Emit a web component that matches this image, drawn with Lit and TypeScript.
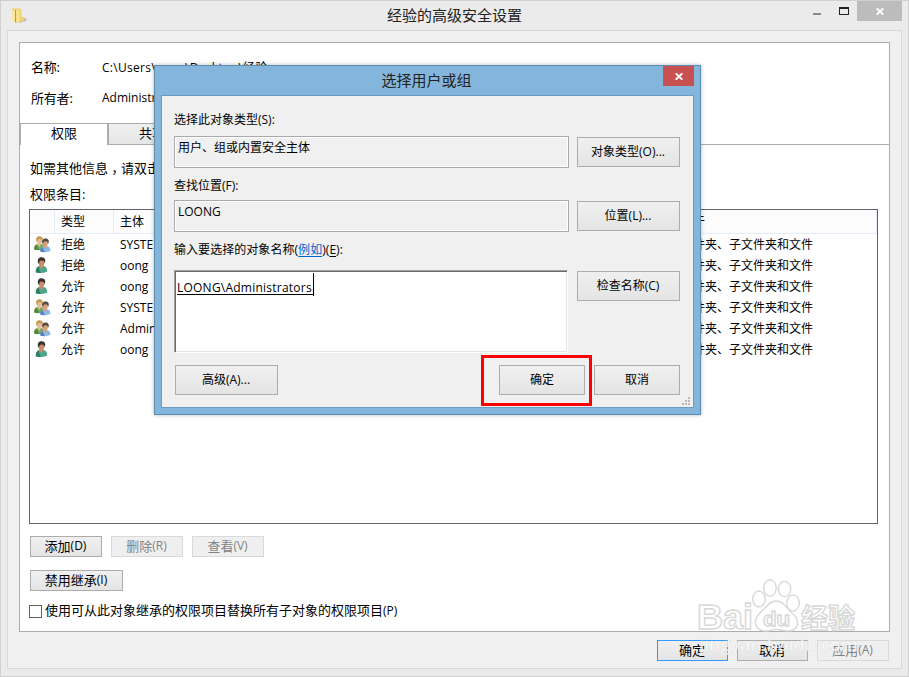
import { LitElement, html, css, svg } from "lit";
import { customElement } from "lit/decorators.js";

const entries = [
  { group: true, type: "拒绝", who: "SYSTEM" },
  { group: false, type: "拒绝", who: "oong" },
  { group: false, type: "允许", who: "oong" },
  { group: true, type: "允许", who: "SYSTEM" },
  { group: true, type: "允许", who: "Administrators" },
  { group: false, type: "允许", who: "oong" },
];

const base = css`
  * { box-sizing: border-box; }
  .btn {
    display: flex; align-items: center; justify-content: center;
    border: 1px solid #acacac; background: linear-gradient(#f0f0f0, #e4e4e4);
    color: #000; white-space: nowrap; flex: none;
    padding: 0 1px 2px 0;
  }
`;

const person = (hair: string, skin: string, body: string, shade: string) => svg`
  <path d="M1 15 C.6 10.5 3 9.3 5 8.6 L8.2 8.6 C11 9.3 12.4 10.5 12.3 14.6 Q6 17 1 15Z" fill=${body}/>
  <path d="M1 15 C.8 12 2 10.3 3.4 9.5 L6 15.8 Q3 15.8 1 15Z" fill=${shade}/>
  <path d="M4.6 7 L8.6 7 L8.4 9.4 L6.6 12.4 L4.6 9.4Z" fill=${skin}/>
  <ellipse cx="6.8" cy="5" rx="2.9" ry="3.6" fill=${skin}/>
  <path d="M3.4 6 C2 1.6 4.6 0 7 .1 C10 .2 11.2 2.6 10 6.2 C9.6 4.2 8.6 3.4 6.8 3.3 C5.2 3.3 4.4 4 4.2 6.6Z" fill=${hair}/>`;

const userIcon = html`<svg width="17" height="17" viewBox="0 0 17 17">
  <g transform="translate(.8 .2)">${person("#3b332e", "#c98c66", "#4ea587", "#2f7d67")}</g></svg>`;
const groupIcon = html`<svg width="17" height="17" viewBox="0 0 17 17">
  <g transform="translate(-.6 .2) scale(.9 .88)">${person("#c2994e", "#e5bd92", "#75a957", "#4f8440")}</g>
  <g transform="translate(5.4 2.4) scale(.9 .87)">${person("#57493f", "#d7a17b", "#8eb9e6", "#4f83bd")}</g></svg>`;

const cross = html`<svg width="8" height="7" viewBox="0 0 8 7"><path d="M.7 .3 L7.3 6.7 M7.3 .3 L.7 6.7" stroke="#fff" stroke-width="1.9"/></svg>`;

@customElement("pick-dialog")
class PickDialog extends LitElement {
  static styles = [base, css`
    :host {
      display: flex; flex-direction: column; box-sizing: border-box;
      width: 547px; height: 350px; padding: 0 6px 6px;
      background: #84b6dc; border: 1px solid #5b8cb2;
      box-shadow: 0 0 4px rgba(0,0,0,.28);
      font-size: 12px; color: #000;
    }
    .title { height: 29px; display: flex; flex: none; }
    .caption { flex: 1; text-align: center; font-size: 15px; line-height: 29px; padding-left: 29px; color: #222; }
    .close { width: 31px; height: 20px; background: #c75050; display: grid; place-items: center; padding: 1px 0 0 1px; }
    .client {
      flex: 1; background: #f0f0f0; border: 1px solid #6a9bc0;
      padding: 11px 13px 0 12px; display: flex; flex-direction: column;
    }
    .label { height: 29px; line-height: 25px; white-space: nowrap; flex: none; }
    .label.mid { height: 32px; line-height: 35px; }
    .label.tall { height: 38px; line-height: 35px; letter-spacing: .05px; }
    .row { display: flex; justify-content: space-between; flex: none; }
    .field {
      width: 395px; height: 32px; border: 1px solid #a9a9ae; box-shadow: inset 0 0 0 1px #fff;
      padding: 2px 3px; line-height: 18px; background: #f0f0f0;
    }
    .side { width: 103px; height: 30px; margin-top: 1px; }
    .area {
      width: 394px; height: 83px; background: #fff; padding: 7px 1px;
      border: 1px solid #a0a0a0; border-right-color: #fff; border-bottom-color: #fff;
      box-shadow: inset 1px 1px 0 #696969, inset -1px -1px 0 #e3e3e3;
      display: flex; align-items: flex-start;
    }
    .value { border-bottom: 1px solid #000; line-height: 20px; height: 17px; letter-spacing: .23px; margin-left: 1px; width: 136px; white-space: nowrap; }
    .caret { width: 1px; height: 23px; background: #000; margin-top: -5px; }
    .link { color: #0066cc; text-decoration: underline; text-underline-offset: 2px; }
    .key { text-decoration: underline; text-underline-offset: 2px; }
    .actions { margin-top: 12px; display: flex; gap: 9px; padding-left: 1px; }
    .wide { width: 103px; height: 30px; margin-right: auto; }
    .small { width: 86px; height: 30px; }
    .actions .small { padding-right: 0; }
    .grip { align-self: flex-end; margin: 2px -10px 0 0; flex: none; display: block; }
  `];
  render() {
    return html`
      <div class="title">
        <div class="caption">选择用户或组</div>
        <div class="close">${cross}</div>
      </div>
      <div class="client">
        <div class="label">选择此对象类型(S):</div>
        <div class="row"><div class="field">用户、组或内置安全主体</div><div class="btn side">对象类型(O)...</div></div>
        <div class="label mid">查找位置(F):</div>
        <div class="row"><div class="field">LOONG</div><div class="btn side">位置(L)...</div></div>
        <div class="label tall">输入要选择的对象名称(<span class="link">例如</span>)(<span class="key">E</span>):</div>
        <div class="row"><div class="area"><div class="value">LOONG\\Administrators</div><div class="caret"></div></div><div class="btn side">检查名称(C)</div></div>
        <div class="actions"><div class="btn wide">高级(A)...</div><div class="btn small">确定</div><div class="btn small">取消</div></div>
        <svg class="grip" width="8" height="8" fill="#b8b8b8"><path d="M6 0h2v2h-2zM3 3h2v2h-2zM6 3h2v2h-2zM0 6h2v2h-2zM3 6h2v2h-2zM6 6h2v2h-2z"/></svg>
      </div>`;
  }
}

@customElement("app-root")
class AppRoot extends LitElement {
  static styles = [base, css`
    :host {
      display: flex; flex-direction: column; position: relative; overflow: hidden; box-sizing: border-box;
      width: 909px; height: 677px; background: #ebebeb; border: 1px solid #d0d0d0;
      padding: 0 6px 7px 6px; color: #000;
      font: 12px "Open Sans", "Noto Sans CJK SC", sans-serif;
    }
    .titlebar { height: 29px; flex: none; display: flex; }
    .folder { margin: 7px 0 0 4px; width: 17px; height: 16px; flex: none; }
    .caption { flex: 1; text-align: center; font-size: 15px; line-height: 29px; color: #222; padding-left: 68px; }
    .ctl { display: flex; flex: none; }
    .min { width: 8px; height: 2px; background: #888; margin: 12px 18px 0 0; }
    .max { width: 10px; height: 8px; border: 1px solid #222; border-top-width: 2px; margin: 6px 8px 0 0; }
    .x { width: 45px; height: 20px; background: #bcbcbc; display: grid; place-items: center; padding: 1px 0 0 1px; }
    .client { flex: 1; background: #f0f0f0; border: 1px solid #d9d9d9; padding: 11px 12px 0 11px; }
    .panel { width: 871px; height: 590px; background: #fff; border: 1px solid #acacac; }
    .line { display: flex; padding-left: 11px; height: 31px; line-height: 30px; font-size: 13px; white-space: nowrap; }
    .line:first-child { margin-top: 9px; }
    .line .k { width: 71px; letter-spacing: -.2px; }
    .line .v { font-size: 12px; display: flex; }
    .line:first-child .v { line-height: 31px; letter-spacing: .3px; }
    .user { width: 29px; text-align: center; letter-spacing: 0; }
    .tabs { display: flex; height: 22px; margin-top: 9px; border-bottom: 1px solid #acacac; font-size: 13px; text-align: center; line-height: 18px; }
    .tab { width: 87px; height: 22px; background: linear-gradient(#f0f0f0, #e5e5e5); border: 1px solid #acacac; border-left: 0; }
    .tab.on { width: 89px; background: #fff; border-bottom: 0; border-left: 1px solid #acacac; border-right: 2px solid #acacac; }
    .text { padding-left: 10px; font-size: 13px; line-height: 26px; white-space: nowrap; }
    .comma { font-family: "Noto Sans CJK TC", sans-serif; line-height: 0; vertical-align: -4px; }
    .first { margin-top: 10px; height: 26px; }
    .list { width: 849px; height: 315px; margin: 2px 0 0 9px; border: 1px solid #646468; }
    .cols { display: grid; grid-template-columns: 25px 59px 549px 1fr; }
    .head { height: 24px; line-height: 23px; background: #fcfcfd; border-bottom: 1px solid #e3ecf6; }
    .head > div { padding-left: 6px; border-right: 1px solid #e3ecf6; }
    .row { height: 21px; line-height: 22px; margin-bottom: .1px; }
    .row > div { padding-left: 6px; white-space: nowrap; }
    .row > .ico { padding: 2px 0 0 4px; line-height: 0; }
    .btns { display: flex; gap: 9px; margin: 12px 0 0 10px; }
    .btns.next { margin-top: 13px; }
    .b { height: 21px; width: 72px; font-size: 13px; }
    .b small, .check small { font-size: 12px; }
    .b.inherit { width: 93px; }
    .off { color: #838383; background: #efefef; border-color: #d9d9d9; }
    .slim { width: 71px; }
    .primary { border-color: #3399ff; }
    .check { display: flex; align-items: center; margin: 11px 0 0 9px; height: 17px; font-size: 13px; line-height: 17px; white-space: nowrap; }
    .box { width: 13px; height: 13px; border: 1px solid #606060; background: #fff; margin: 2px 3px 0 0; }
    .foot { display: flex; gap: 9px; justify-content: flex-end; margin-top: 8px; }
    pick-dialog { position: absolute; left: 153px; top: 64px; }
    .mark { position: absolute; left: 480px; top: 354px; width: 111px; height: 51px; border: 3px solid #f00; }
    .wm { position: absolute; left: 689px; top: 574px; }
  `];
  render() {
    return html`
      <div class="titlebar">
        <svg class="folder" viewBox="0 0 17 16">
          <path d="M10 11 L16 10 L14.5 13 L8 15Z" fill="#b9b9b9"/>
          <path d="M1 2 Q1 .6 2 .6 L9 .6 L10.4 2 L10.4 9.6 L13.4 8.6 L13 13 L5 14.8 L1 13Z" fill="#efd070"/>
          <path d="M1 1.6 L4 3 L4 14.5 L1 13Z" fill="#fae99e"/>
          <path d="M4 2 L5.2 2.4 L5.2 14.6 L4 14.2Z" fill="#c29a35"/>
          <path d="M5.2 2 L8.6 1.5 L8.6 13 L5.2 14.5Z" fill="#f8e391"/>
        </svg>
        <div class="caption">经验的高级安全设置</div>
        <div class="ctl"><div class="min"></div><div class="max"></div><div class="x">${cross}</div></div>
      </div>
      <div class="client">
        <div class="panel">
          <div class="line"><div class="k">名称:</div><div class="v"><span>C:\\Users\\</span><span class="user">oong</span><span>\\Desktop\\经验</span></div></div>
          <div class="line"><div class="k">所有者:</div><div class="v">Administrators</div></div>
          <div class="tabs"><div class="tab on">权限</div><div class="tab">共享</div></div>
          <div class="text first">如需其他信息<span class="comma" lang="zh-TW">，</span>请双击</div>
          <div class="text">权限条目:</div>
          <div class="list">
            <div class="cols head"><div></div><div>类型</div><div>主体</div><div>应用于</div></div>
            ${entries.map((e) => html`<div class="cols row"><div class="ico">${e.group ? groupIcon : userIcon}</div><div>${e.type}</div><div>${e.who}</div><div>此文件夹、子文件夹和文件</div></div>`)}
          </div>
          <div class="btns"><div class="btn b">添加<small>(D)</small></div><div class="btn b off">删除<small>(R)</small></div><div class="btn b off">查看<small>(V)</small></div></div>
          <div class="btns next"><div class="btn b inherit">禁用继承<small>(I)</small></div></div>
          <div class="check"><div class="box"></div>使用可从此对象继承的权限项目替换所有子对象的权限项目<small>(P)</small></div>
        </div>
        <div class="foot"><div class="btn b slim primary">确定</div><div class="btn b slim">取消</div><div class="btn b off">应用<small>(A)</small></div></div>
      </div>
      <pick-dialog></pick-dialog>
      <div class="mark"></div>
      <svg class="wm" width="180" height="90" viewBox="0 0 180 90">
        <g fill="#fff" stroke="#d8d8d8" stroke-width="1.4">
          <text x="7" y="54" font-family="Liberation Sans" font-size="35" font-weight="700" textLength="56" lengthAdjust="spacingAndGlyphs">Bai</text>
          <ellipse cx="69" cy="24" rx="6.3" ry="8"/><ellipse cx="80" cy="13" rx="6.2" ry="8.3"/>
          <ellipse cx="94.5" cy="14" rx="6.2" ry="7.6"/><ellipse cx="103" cy="28" rx="6.3" ry="8"/>
          <path d="M86 26 C79 26 76 33 70 38 C62 46 65 56 76 56 C82 56 81 54.5 86 54.5 C92 54.5 92 56 98 56 C109 56 110 45 103 39 C96 33 94 26 86 26Z"/>
          <text x="73" y="51" font-family="Liberation Sans" font-size="21" font-weight="700" textLength="27" lengthAdjust="spacingAndGlyphs">du</text>
          <text x="111" y="53" font-family="Noto Sans CJK SC" font-size="27" font-weight="700">经验</text>
        </g>
        <text x="9" y="76" font-family="Open Sans" font-size="18" font-weight="600" fill="#fff" fill-opacity=".8" stroke="#d4d4d4" stroke-opacity=".7" stroke-width=".5" textLength="159" lengthAdjust="spacingAndGlyphs">jingyan.baidu.com</text>
      </svg>`;
  }
}
